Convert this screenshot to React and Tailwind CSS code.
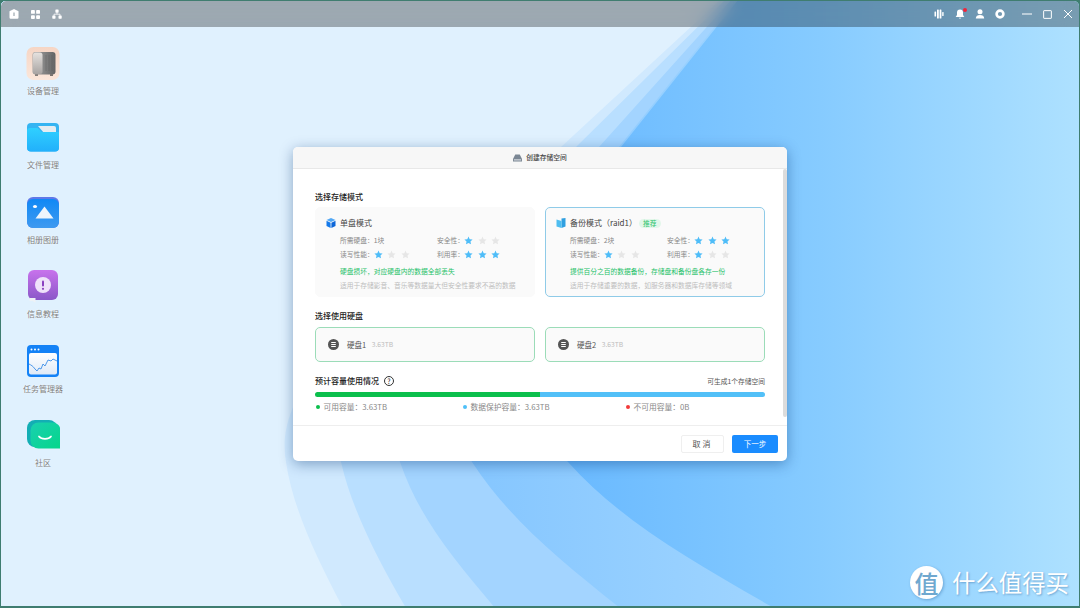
const STAR = "M5 .6l1.35 2.95 3.2.38-2.37 2.18.63 3.17L5 7.7 2.19 9.28l.63-3.17L.45 3.93l3.2-.38z";

// full-width punctuation, kept as escapes so it survives editing
const COLON = "\uFF1A";
const COMMA = "\uFF0C";

function Star({ on }) {
  return (
    <svg viewBox="0 0 10 10" className="w-[9px] h-[9px] shrink-0">
      <path d={STAR} fill={on ? "#4fbdf8" : "#e6e6e6"} />
    </svg>
  );
}

function Stars({ label, count }) {
  return (
    <div className="flex items-center h-[14px]">
      <span>
        {label}
        {COLON}
      </span>
      <div className="flex gap-[4.5px]">
        {[1, 2, 3].map((n) => (
          <Star key={n} on={n <= count} />
        ))}
      </div>
    </div>
  );
}

function Wallpaper() {
  return (
    <svg viewBox="0 0 1080 608" className="absolute -left-[1px] -top-[1px] w-[1080px] h-[608px]">
      <defs>
        <linearGradient id="base" gradientUnits="userSpaceOnUse" x1="560" y1="0" x2="1080" y2="0">
          <stop offset="0" stopColor="#69b9ff" />
          <stop offset="0.5" stopColor="#86cbff" />
          <stop offset="1" stopColor="#aee1ff" />
        </linearGradient>
        <linearGradient id="band" gradientUnits="userSpaceOnUse" x1="470" y1="0" x2="780" y2="0">
          <stop offset="0" stopColor="#85c6ff" />
          <stop offset="1" stopColor="#a0d5ff" />
        </linearGradient>
      </defs>
      <rect width="1080" height="608" fill="url(#base)" />
      <path d="M738 0 L621 147 C540 270 500 390 568 462 C620 520 690 560 774 608 L0 608 L0 0Z" fill="url(#band)" />
      <path d="M736 0 L619 147 C500 270 420 370 472 462 C510 520 560 560 620 608 L0 608 L0 0Z" fill="#a3d4ff" />
      <path d="M731 0 L599 147 C460 280 370 370 400 462 C420 520 455 560 495 608 L0 608 L0 0Z" fill="#b9dfff" />
      <path d="M725 0 L576 147 C420 290 320 370 341 462 C352 510 378 560 406 608 L0 608 L0 0Z" fill="#d0e9fe" />
      <path d="M720 0 L561 147 C400 290 270 370 286 462 C293 510 318 560 343 608 L0 608 L0 0Z" fill="#e0f1fe" />
    </svg>
  );
}

function DeviceIcon() {
  return (
    <svg viewBox="0 0 34 34" className="w-[34px] h-[34px]">
      <defs>
        <linearGradient id="devBg" x1="0" y1="0" x2="0" y2="1">
          <stop offset="0" stopColor="#f6d6c5" />
          <stop offset="1" stopColor="#fbe6da" />
        </linearGradient>
        <linearGradient id="devBody" x1="0" y1="0" x2="1" y2="0">
          <stop offset="0" stopColor="#a5a5a5" />
          <stop offset="1" stopColor="#646464" />
        </linearGradient>
        <linearGradient id="devFront" x1="0" y1="0" x2="0" y2="1">
          <stop offset="0" stopColor="#e6e2df" />
          <stop offset="1" stopColor="#a8a4a2" />
        </linearGradient>
      </defs>
      <rect x="0.5" y="0" width="33" height="33" rx="7" fill="url(#devBg)" />
      <rect x="6.5" y="5" width="23" height="22.5" rx="3" fill="url(#devBody)" />
      <rect x="7" y="5.5" width="9.5" height="21.5" rx="2.5" fill="url(#devFront)" />
      <path d="M20 8v16M23 8v16M26 8v16" stroke="#555" strokeOpacity="0.35" strokeWidth="1" />
      <rect x="9" y="27.5" width="3" height="1.2" fill="#555" />
      <rect x="24" y="27.5" width="3" height="1.2" fill="#444" />
    </svg>
  );
}

function FolderIcon() {
  return (
    <svg viewBox="0 0 34 34" className="w-[34px] h-[34px]">
      <defs>
        <linearGradient id="folder" x1="0" y1="0" x2="0" y2="1">
          <stop offset="0" stopColor="#2fd0ff" />
          <stop offset="1" stopColor="#22b0fb" />
        </linearGradient>
      </defs>
      <rect x="1" y="2" width="32" height="28.5" rx="4" fill="#35b4f2" />
      <path d="M12 5h16a2 2 0 0 1 2 2V12H18z" fill="#e4ecf1" />
      <path d="M1 10a3 3 0 0 1 3-3h7.5l4 4H33v15.5a4 4 0 0 1-4 4H5a4 4 0 0 1-4-4z" fill="url(#folder)" />
    </svg>
  );
}

function PhotoIcon() {
  return (
    <svg viewBox="0 0 34 34" className="w-[34px] h-[34px]">
      <defs>
        <linearGradient id="photo" x1="0" y1="0" x2="0" y2="1">
          <stop offset="0" stopColor="#0f88f5" />
          <stop offset="1" stopColor="#3f9af0" />
        </linearGradient>
      </defs>
      <rect x="1" y="1" width="32" height="31" rx="6" fill="#5f78e8" />
      <rect x="1" y="3" width="32" height="29" rx="6" fill="url(#photo)" />
      <ellipse cx="9" cy="10.5" rx="2" ry="1.6" fill="#fff" />
      <path d="M9.5 22.6 L18.5 10.5 L27.5 22.6 Z" fill="#eef5fc" />
    </svg>
  );
}

function InfoIcon() {
  return (
    <svg viewBox="0 0 34 34" className="w-[34px] h-[34px]">
      <defs>
        <linearGradient id="info" x1="0" y1="0" x2="0" y2="1">
          <stop offset="0" stopColor="#c872ec" />
          <stop offset="1" stopColor="#8a58c8" />
        </linearGradient>
      </defs>
      <rect x="2" y="0" width="30" height="30" rx="6" fill="url(#info)" />
      <circle cx="17" cy="15" r="8" fill="#efe2fa" />
      <rect x="16" y="10.5" width="2" height="6" rx="1" fill="#8a3fc0" />
      <circle cx="17" cy="18.8" r="1.1" fill="#8a3fc0" />
      <path d="M3.5 28h6v4.5l-3-1.5h-3z" fill="#eef2f6" />
    </svg>
  );
}

function MonitorIcon() {
  return (
    <svg viewBox="0 0 34 34" className="w-[34px] h-[34px]">
      <defs>
        <linearGradient id="monitor" x1="0" y1="0" x2="0" y2="1">
          <stop offset="0" stopColor="#ffffff" />
          <stop offset="1" stopColor="#dfeaf7" />
        </linearGradient>
      </defs>
      <rect x="1" y="0" width="32" height="32" rx="4" fill="#1482f6" />
      <circle cx="5.5" cy="4.5" r="1" fill="#fff" />
      <circle cx="9" cy="4.5" r="1" fill="#fff" />
      <circle cx="12.5" cy="4.5" r="1" fill="#fff" />
      <rect x="3" y="8" width="28" height="21.5" rx="2" fill="url(#monitor)" />
      <path d="M3 19C5 20 7 21 9 24L11 26 13 23 15 24 17 19 19 21 22 15 25 16 27 14 31 16" fill="none" stroke="#3d8fe8" strokeWidth="0.9" />
    </svg>
  );
}

function CommunityIcon() {
  return (
    <svg viewBox="0 0 34 34" className="w-[34px] h-[34px]">
      <defs>
        <linearGradient id="chat" x1="0" y1="0" x2="1" y2="1">
          <stop offset="0" stopColor="#1ad0b0" />
          <stop offset="1" stopColor="#05d68a" />
        </linearGradient>
      </defs>
      <path d="M1 9a8 8 0 0 1 8-8h14a8 8 0 0 1 8 8v19H9a8 8 0 0 1-8-8z" fill="#13aeb4" />
      <path d="M4.5 11.5a8 8 0 0 1 8-8h14a8 8 0 0 1 8 8v18H12.5a8 8 0 0 1-8-8z" fill="url(#chat)" />
      <path d="M13 17.5c2.5 3.2 9.5 3.2 12 0" fill="none" stroke="#fff" strokeWidth="1.7" strokeLinecap="round" />
    </svg>
  );
}

function DiskIcon() {
  return (
    <svg viewBox="0 0 12 12" className="w-[11px] h-[11px] shrink-0">
      <circle cx="6" cy="6" r="6" fill="#555" />
      <path d="M3.5 3.8h5M3.5 6h5M3.5 8.2h5" stroke="#fff" strokeWidth="1.1" />
    </svg>
  );
}

function SingleIcon() {
  return (
    <svg viewBox="0 0 10 10" className="w-[10px] h-[10px] shrink-0">
      <path d="M5 0l4.5 2L5 4 .5 2z" fill="#52a8f5" />
      <path d="M.5 2.8L4.6 4.8V10L.5 8z" fill="#1479ea" />
      <path d="M9.5 2.8L5.4 4.8V10L9.5 8z" fill="#0d66d8" />
    </svg>
  );
}

function BackupIcon() {
  return (
    <svg viewBox="0 0 10 10" className="w-[10px] h-[10px] shrink-0">
      <path d="M5.5 .5L9.5 0v8.5l-4 1.5z" fill="#2f9fe0" />
      <path d="M.5 1.5L5.5 3v7L.5 8.5z" fill="#4fbdf0" />
    </svg>
  );
}

function ModeCard({ icon, title, badge, disks, safe, speed, usage, warn, note, active }) {
  return (
    <div
      className={`w-[220px] h-[90px] rounded-[5px] border bg-[#fafafa] pt-[9px] pl-[10px] ${
        active ? "border-[#8fcbe8]" : "border-[#fafafa]"
      }`}
    >
      <div className="flex items-center gap-[4px] h-[12px] text-[8px] text-[#444]">
        {icon}
        <span>{title}</span>
        {badge && (
          <span className="-ml-[2px] px-[4px] h-[9px] leading-[9px] rounded-full bg-[#e2f7ea] text-[6.75px] text-[#2cc36b]">
            {badge}
          </span>
        )}
      </div>
      <div className="pl-[14px] mt-[4px] text-[6.75px] text-[#888]">
        <div className="grid grid-cols-[97px_auto]">
          <div className="flex items-center h-[14px]">
            所需硬盘{COLON}
            {disks}块
          </div>
          <Stars label="安全性" count={safe} />
          <Stars label="读写性能" count={speed} />
          <Stars label="利用率" count={usage} />
        </div>
        <div className="mt-[5px] h-[10px] leading-[10px] text-[#25c168]">{warn}</div>
        <div className="mt-[4px] h-[10px] leading-[10px] text-[#bdbdbd]">{note}</div>
      </div>
    </div>
  );
}

function DiskCard({ name }) {
  return (
    <div className="w-[220px] h-[35px] rounded-[5px] border border-[#9bdcb8] bg-[#fafafa] flex items-center pl-[12px]">
      <DiskIcon />
      <span className="ml-[8px] text-[7.5px] text-[#555]">{name}</span>
      <span className="ml-[5.5px] text-[6.75px] text-[#bdbdbd]">3.63TB</span>
    </div>
  );
}

function Legend({ color, text, className }) {
  return (
    <div className={`flex items-center gap-[3.5px] h-[10px] text-[7.75px] text-[#888] ${className}`}>
      <span className={`w-[4.5px] h-[4.5px] rounded-full ${color}`} />
      <span>{text}</span>
    </div>
  );
}

function Dialog() {
  return (
    <div className="absolute left-[292px] top-[146px] w-[494px] h-[314px] rounded-[5px] bg-white overflow-hidden shadow-[0_3px_14px_rgba(0,50,110,0.4)]">
      {/* Header */}
      <div className="h-[22px] bg-[#f7f7f7] border-b border-[#e8e8e8] flex items-center justify-center gap-[4px] text-[6.75px] font-medium text-[#444]">
        <svg viewBox="0 0 10 8" className="w-[9px] h-[8px]">
          <path d="M2.5 0h5L10 5v3H0V5z" fill="#7b8794" />
          <rect x="1" y="5.5" width="8" height="1.2" fill="#dfe3e7" />
        </svg>
        <span>创建存储空间</span>
      </div>

      {/* Body */}
      <div className="relative h-[256px] px-[22px] pt-[22px]">
        <div className="absolute right-0 top-0 w-[4px] h-[248px] bg-[#dcdcdc] rounded-full" />

        <div className="h-[12px] leading-[12px] text-[8px] font-medium text-[#222]">选择存储模式</div>
        <div className="mt-[4px] flex gap-[10px]">
          <ModeCard
            icon={<SingleIcon />}
            title="单盘模式"
            disks={1}
            safe={1}
            speed={1}
            usage={3}
            warn={`硬盘损坏${COMMA}对应硬盘内的数据全部丢失`}
            note="适用于存储影音、音乐等数据量大但安全性要求不高的数据"
          />
          <ModeCard
            active
            icon={<BackupIcon />}
            title={"备份模式\uFF08raid1\uFF09"}
            badge="推荐"
            disks={2}
            safe={3}
            speed={1}
            usage={1}
            warn={`提供百分之百的数据备份${COMMA}存储盘和备份盘各存一份`}
            note={`适用于存储重要的数据${COMMA}如服务器和数据库存储等领域`}
          />
        </div>

        <div className="mt-[13px] h-[12px] leading-[12px] text-[8px] font-medium text-[#222]">选择使用硬盘</div>
        <div className="mt-[5px] flex gap-[10px]">
          <DiskCard name="硬盘1" />
          <DiskCard name="硬盘2" />
        </div>

        <div className="mt-[13px] h-[12px] flex items-center justify-between">
          <div className="flex items-center gap-[5px] text-[8px] font-medium text-[#222]">
            <span>预计容量使用情况</span>
            <span className="w-[10px] h-[10px] rounded-full border border-[#333] flex items-center justify-center text-[7px] font-normal leading-none">
              ?
            </span>
          </div>
          <span className="text-[6.75px] text-[#555]">可生成1个存储空间</span>
        </div>
        <div className="mt-[5px] h-[5px] rounded-full overflow-hidden flex">
          <div className="w-1/2 bg-[#0bbf4c]" />
          <div className="w-1/2 bg-[#52c0f8]" />
        </div>
        <div className="mt-[5px] flex pl-[0.5px]">
          <Legend color="bg-[#0bbf4c]" text={`可用容量${COLON}3.63TB`} className="w-[147px]" />
          <Legend color="bg-[#4fc0f8]" text={`数据保护容量${COLON}3.63TB`} className="w-[163px]" />
          <Legend color="bg-[#f23a3a]" text={`不可用容量${COLON}0B`} />
        </div>
      </div>

      {/* Footer */}
      <div className="h-[36px] border-t border-[#eeeeee] flex items-center justify-end gap-[8px] pr-[9px] pt-[1px]">
        <button className="w-[43px] h-[18px] rounded-[2px] border border-[#efefef] bg-white text-[8px] tracking-[2px] text-[#555]">
          取消
        </button>
        <button className="w-[46px] h-[18px] rounded-[2px] bg-[#1a8cff] text-[7.5px] text-white">下一步</button>
      </div>
    </div>
  );
}

const apps = [
  { label: "设备管理", icon: <DeviceIcon /> },
  { label: "文件管理", icon: <FolderIcon /> },
  { label: "相册图册", icon: <PhotoIcon /> },
  { label: "信息教程", icon: <InfoIcon /> },
  { label: "任务管理器", icon: <MonitorIcon /> },
  { label: "社区", icon: <CommunityIcon /> },
];

export default function App() {
  return (
    <div
      className="w-[1080px] h-[608px] overflow-hidden bg-[#3f7d70] px-[1px] pt-[1px] pb-[2px]"
      style={{ fontFamily: '"Noto Sans CJK SC", "Noto Sans", sans-serif' }}
    >
      <div className="relative h-full rounded-t-[5px] overflow-hidden flex flex-col">
        <Wallpaper />

        {/* Top bar */}
        <div className="relative h-[26px] shrink-0 bg-black/30 backdrop-blur-sm flex items-center text-white">
          <div className="flex items-center gap-[12px] pl-[8px]">
            <svg viewBox="0 0 10 10" className="w-[10px] h-[10px]">
              <path d="M2.5 1.2L5 0l2.5 1.2 2 1v6.3a1.2 1.2 0 0 1-1.2 1.2H1.7A1.2 1.2 0 0 1 .5 8.5V2.2z" fill="#fff" />
              <rect x="4.4" y="3.5" width="1.2" height="3.5" fill="#9ca8ae" />
            </svg>
            <svg viewBox="0 0 10 10" className="w-[9px] h-[9px]">
              <rect width="4.3" height="4.3" rx="1" fill="#fff" />
              <rect x="5.7" width="4.3" height="4.3" rx="1" fill="#fff" />
              <rect y="5.7" width="4.3" height="4.3" rx="1" fill="#fff" />
              <rect x="5.7" y="5.7" width="4.3" height="4.3" rx="1" fill="#fff" />
            </svg>
            <svg viewBox="0 0 10 10" className="w-[10px] h-[10px]">
              <rect x="3.4" y="0.5" width="3.2" height="3.2" rx="0.6" fill="#fff" />
              <rect x="0.3" y="6.5" width="3.2" height="3.2" rx="0.6" fill="#fff" />
              <rect x="6.5" y="6.5" width="3.2" height="3.2" rx="0.6" fill="#fff" />
              <path d="M5 3.5V5.2M2 6.8V5.2h6v1.6" stroke="#fff" strokeWidth="0.8" fill="none" />
            </svg>
          </div>
          <div className="ml-auto flex items-center gap-[10px] pr-[6px]">
            <svg viewBox="0 0 10 10" className="w-[10px] h-[10px] -ml-[1px] mr-[1px]">
              <rect x="0.5" y="2.5" width="1.6" height="5" rx="0.6" fill="#fff" />
              <rect x="3" y="0.5" width="1.8" height="9" rx="0.6" fill="#fff" />
              <rect x="5.6" y="0.5" width="1.8" height="9" rx="0.6" fill="#fff" />
              <rect x="8.2" y="3" width="1.4" height="4" rx="0.6" fill="#fff" />
            </svg>
            <div className="relative w-[10px] h-[10px]">
              <svg viewBox="0 0 10 10" className="w-[10px] h-[10px]">
                <path d="M5 .5a3 3 0 0 1 3 3V6l1.3 2H.7L2 6V3.5a3 3 0 0 1 3-3zM3.8 8.7h2.4L5 10z" fill="#fff" />
              </svg>
              <span className="absolute -top-[1.5px] -right-[1.5px] w-[4px] h-[4px] rounded-full bg-[#f0233a]" />
            </div>
            <svg viewBox="0 0 10 10" className="w-[10px] h-[10px]">
              <circle cx="5" cy="2.8" r="2.5" fill="#fff" />
              <path d="M.8 9.5C.8 7 2.6 5.9 5 5.9s4.2 1.1 4.2 3.6z" fill="#fff" />
            </svg>
            <svg viewBox="0 0 10 10" className="w-[10px] h-[10px]">
              <circle cx="5" cy="5" r="3.4" fill="none" stroke="#fff" strokeWidth="2.6" />
            </svg>
            <svg viewBox="0 0 10 10" className="ml-[7px] w-[10px] h-[10px]">
              <path d="M0 5h10" stroke="#fff" strokeWidth="1" />
            </svg>
            <svg viewBox="0 0 10 10" className="w-[9px] h-[9px] mx-[1px]">
              <rect x="0.7" y="0.7" width="8.6" height="8.6" rx="0.5" fill="none" stroke="#fff" strokeWidth="1.1" />
            </svg>
            <svg viewBox="0 0 10 10" className="w-[10px] h-[10px]">
              <path d="M1 1l8 8M9 1l-8 8" stroke="#fff" strokeWidth="1" />
            </svg>
          </div>
        </div>

        {/* Desktop icons */}
        <div className="relative w-[84px] pt-[20px] flex flex-col items-center">
          {apps.map((app) => (
            <div key={app.label} className="h-[74.4px] flex flex-col items-center">
              {app.icon}
              <span className="mt-[5px] h-[10px] leading-[10px] text-[8px] text-[#808080] whitespace-nowrap [text-shadow:0_0_2px_#fff]">
                {app.label}
              </span>
            </div>
          ))}
        </div>

        <Dialog />

        {/* Watermark */}
        <div className="absolute right-[10px] bottom-[7px] flex items-center gap-[9px]">
          <div className="w-[33px] h-[33px] rounded-full bg-white flex items-center justify-center text-[24px] leading-none text-[#6fa8cf] font-medium shadow-[1px_1px_3px_rgba(0,60,120,0.3)]">
            值
          </div>
          <span className="text-[23.4px] leading-none text-white whitespace-nowrap [text-shadow:1px_1px_2px_rgba(0,60,120,0.35)]">
            什么值得买
          </span>
        </div>
      </div>
    </div>
  );
}
